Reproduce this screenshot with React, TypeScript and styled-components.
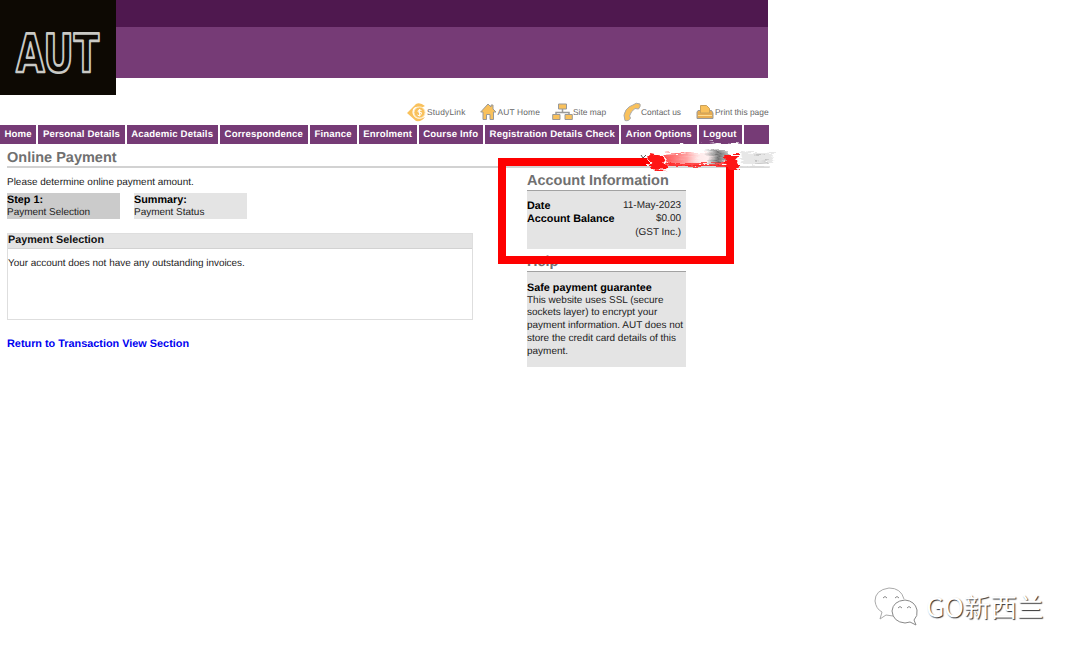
import React from 'react';
import styled, { createGlobalStyle } from 'styled-components';

const Global = createGlobalStyle`
  * { box-sizing: border-box; }
  body { margin: 0; background: #fff; font-family: "Liberation Sans", Arial, sans-serif; text-rendering: geometricPrecision; }
`;

const Page = styled.div`
  position: relative;
  width: 1080px;
  height: 656px;
  overflow: hidden;
  color: #222;
  font-size: 9.97px;
  line-height: 12.75px;
`;
const Site = styled.div`
  width: 769px;
`;
const Header = styled.header`
  display: flex;
  height: 95px;
`;
const LogoBox = styled.div`
  width: 116px;
  height: 94.5px;
  background: #0d0903;
`;
const Banner = styled.div`
  width: 652px;
  height: 78px;
  background: #763b76;
  border-top: 27px solid #4f184f;
`;
const Tools = styled.div`
  display: flex;
  height: 30px;
  padding-left: 407px;
`;
const Tool = styled.a<{ $w: number; $gap: number; $ls: number }>`
  display: flex;
  flex: none;
  align-items: center;
  gap: ${(p) => p.$gap}px;
  width: ${(p) => p.$w}px;
  height: 20px;
  margin-top: 7px;
  color: #666;
  font-size: 8.4px;
  white-space: nowrap;
  letter-spacing: ${(p) => p.$ls}px;
  svg { flex: none; }
`;
const Nav = styled.nav`
  display: flex;
  gap: 2px;
  height: 19px;
`;
const NavItem = styled.a<{ $w: number }>`
  width: ${(p) => p.$w}px;
  padding-left: 4.5px;
  background: #763b76;
  color: #fff;
  font-weight: bold;
  font-size: 9.6px;
  line-height: 20px;
  letter-spacing: 0.15px;
  white-space: nowrap;
`;
const Title = styled.h1`
  margin: 0 0 0 7px;
  height: 24px;
  border-bottom: 2px solid #d2d2d2;
  color: #707070;
  font-size: 14.5px;
  line-height: 28px;
`;
const Columns = styled.div`
  display: flex;
  padding-left: 7px;
`;
const Main = styled.main`
  width: 520px;
  padding-top: 9px;
`;
const Intro = styled.p`
  margin: 0;
  height: 16px;
  font-size: 9.97px;
`;
const Steps = styled.div`
  display: flex;
  gap: 14px;
  height: 40px;
`;
const Step = styled.div<{ $active?: boolean }>`
  width: 113px;
  height: 26px;
  padding-top: 1px;
  background: ${(p) => (p.$active ? '#cbcbcb' : '#e4e4e4')};
`;
const Strong = styled.strong`
  display: block;
  color: #000;
  font-size: 10.8px;
`;
const Panel = styled.section`
  width: 466px;
  height: 87px;
  border: 1.5px solid #dedede;
`;
const PanelHead = styled.h2`
  margin: 0;
  height: 14.5px;
  border-bottom: 1px solid #d2d2d2;
  background: #e4e4e4;
  color: #111;
  font-size: 10.8px;
  line-height: 13.5px;
`;
const PanelText = styled.p`
  margin: 9px 0 0;
  font-size: 9.94px;
`;
const Return = styled.a`
  display: block;
  margin-top: 18px;
  color: #0000f0;
  font-weight: bold;
  font-size: 10.87px;
`;
const Side = styled.aside`
  width: 159px;
  padding-top: 1px;
`;
const SideTitle = styled.h2`
  margin: 0;
  height: 21.5px;
  border-bottom: 1px solid #a2a2a2;
  color: #707070;
  font-size: 14.5px;
  line-height: 24px;
  white-space: nowrap;
`;
const SideBox = styled.div<{ $h: number; $mb?: number; $pt?: number }>`
  height: ${(p) => p.$h}px;
  margin-bottom: ${(p) => p.$mb ?? 0}px;
  padding-top: ${(p) => p.$pt ?? 9.5}px;
  background: #e4e4e4;
  white-space: nowrap;
`;
const Row = styled.div`
  display: flex;
  justify-content: space-between;
  height: 13.3px;
  padding-right: 5px;
`;
const Highlight = styled.div`
  position: absolute;
  left: 498px;
  top: 158px;
  width: 236px;
  height: 106px;
  border: 8px solid #fe0000;
`;
const Scribble = styled.svg`
  position: absolute;
  left: 630px;
  top: 138px;
`;
const Watermark = styled.div`
  position: absolute;
  left: 873px;
  top: 584px;
  display: flex;
  align-items: center;
  gap: 7px;
  color: #fff;
  font: 26.5px/44px "Noto Sans CJK SC", sans-serif;
  text-shadow: 1px 1px 1px #333;
  white-space: nowrap;
`;

const o = '#f9c15c';
const g = '#999';

const StudyIcon = () => (
  <svg width="20" height="20" viewBox="0 0 20 20">
    <path d="M0 11 9 2Q13 0 18 4L14 6Q9 3 6 7Q4 13 9 16Q13 18 18 15Q15 20 9 19Z" fill={o} />
    <circle cx="12.5" cy="10.5" r="5.6" fill={o} stroke="#fff0d0" />
    <path d="M14.5 8.5q-3-1.5-3.5.3t2 1.5 1 2.3-3.5.3M12.6 7v7" fill="none" stroke="#fff" strokeWidth="1" />
  </svg>
);
const HomeIcon = () => (
  <svg width="17" height="18" viewBox="0 0 17 18">
    <path d="M.7 9 8 1 11 4V2H13V6L16 9H13.500V16.500H10V11.500H6.500V16.500H3V9Z" fill={o} stroke={g} />
  </svg>
);
const MapIcon = () => (
  <svg width="21" height="18" viewBox="0 0 21 18">
    <path d="M10.5 6v4M4 12V9.5H17V12" fill="none" stroke={g} strokeWidth="1.5" />
    <path d="M6.500 1h8v5h-8zM.700 11.500h7.300v5H.700zM13 11.500h7.300v5H13z" fill={o} stroke={g} />
  </svg>
);
const PhoneIcon = () => (
  <svg width="18" height="20" viewBox="0 0 18 20">
    <path d="M10 3Q13 0 17 2Q18 4 15.500 7L12 6.500Q8 9 6.500 14L7.500 16Q6 19.500 2 18.500Q-.5 13 3 8Q6 4 10 3Z" fill={o} stroke="#aaa" />
  </svg>
);
const PrintIcon = () => (
  <svg width="18" height="17" viewBox="0 0 18 17">
    <path d="M2 6.500H15.500L17 9V14.500H1V8Z" fill="#e7ad52" stroke={g} />
    <path d="M4.500 9V1.500H10.500L13.500 4.500V9Z" fill={o} stroke="#c9a05a" />
    <path d="M2 11.500H16" stroke="#ffdf94" />
  </svg>
);

const tools = [
  { t: 'StudyLink', w: 73, gap: 0, ls: 0.2, I: StudyIcon },
  { t: 'AUT Home', w: 72, gap: 0.5, ls: 0.15, I: HomeIcon },
  { t: 'Site map', w: 71, gap: 0, ls: 0, I: MapIcon },
  { t: 'Contact us', w: 72.5, gap: 0, ls: 0, I: PhoneIcon },
  { t: 'Print this page', w: 74, gap: 1.5, ls: 0, I: PrintIcon },
];
const nav: [string, number][] = [
  ['Home', 36.5], ['Personal Details', 86.5], ['Academic Details', 91.5], ['Correspondence', 88],
  ['Finance', 47], ['Enrolment', 58], ['Course Info', 64.5], ['Registration Details Check', 134.5],
  ['Arion Options', 75.5], ['Logout', 43.5], ['', 25],
];

export default function App() {
  return (
    <Page>
      <Global />
      <Site>
        <Header>
          <LogoBox>
            <svg width="116" height="94" fontFamily="DejaVu Sans, sans-serif" fontWeight="bold" fontSize="53" fill="#0d0903" stroke="#c9c9c5" strokeWidth="2.6" strokeLinejoin="round">
              <text x="16" y="72" textLength="83" lengthAdjust="spacingAndGlyphs">AUT</text>
            </svg>
          </LogoBox>
          <Banner />
        </Header>
        <Tools>
          {tools.map(({ t, w, gap, ls, I }) => (
            <Tool key={t} $w={w} $gap={gap} $ls={ls}><I />{t}</Tool>
          ))}
        </Tools>
        <Nav>{nav.map(([t, w]) => <NavItem key={t} $w={w}>{t}</NavItem>)}</Nav>
        <Title>Online Payment</Title>
        <Columns>
          <Main>
            <Intro>Please determine online payment amount.</Intro>
            <Steps>
              <Step $active><Strong>Step 1:</Strong>Payment Selection</Step>
              <Step><Strong>Summary:</Strong>Payment Status</Step>
            </Steps>
            <Panel>
              <PanelHead>Payment Selection</PanelHead>
              <PanelText>Your account does not have any outstanding invoices.</PanelText>
            </Panel>
            <Return>Return to Transaction View Section</Return>
          </Main>
          <Side>
            <SideTitle>Account Information</SideTitle>
            <SideBox $h={58} $mb={1.5}>
              <Row><Strong>Date</Strong>11-May-2023</Row>
              <Row><Strong>Account Balance</Strong>$0.00</Row>
              <Row><span />(GST Inc.)</Row>
            </SideBox>
            <SideTitle>Help</SideTitle>
            <SideBox $h={95} $pt={10.3}>
              <Strong>Safe payment guarantee</Strong>
              This website uses SSL (secure<br />sockets layer) to encrypt your<br />
              payment information. AUT does not<br />store the credit card details of this<br />payment.
            </SideBox>
          </Side>
        </Columns>
      </Site>
      <Highlight />
      <Scribble width="150" height="40" viewBox="0 0 150 40">
        <defs>
          <filter id="brush" x="-10%" y="-30%" width="120%" height="160%">
            <feTurbulence type="fractalNoise" baseFrequency="0.07 0.5" numOctaves="3" seed="4" result="n" />
            <feDisplacementMap in="SourceGraphic" in2="n" scale="9" xChannelSelector="R" yChannelSelector="A" />
            <feGaussianBlur stdDeviation="0.5" />
          </filter>
          <linearGradient id="red" x1="0" x2="1">
            <stop offset="0" stopColor="#f22" stopOpacity=".8" />
            <stop offset=".45" stopColor="#f66" stopOpacity=".6" />
            <stop offset=".7" stopColor="#fbb" stopOpacity=".3" />
            <stop offset="1" stopColor="#fcc" stopOpacity=".2" />
          </linearGradient>
          <linearGradient id="grey" x1="0" x2="1">
            <stop offset="0" stopColor="#999" stopOpacity="0" />
            <stop offset=".6" stopColor="#444" stopOpacity=".75" />
            <stop offset="1" stopColor="#666" stopOpacity=".4" />
          </linearGradient>
        </defs>
        <path d="M18 14 30 10 48 8 70 7 88 5 104 6 120 8 143 11 143 27 96 26 18 28Z" fill="#fff" filter="url(#brush)" />
        <path d="M20 14H102V27H20Z" fill="#fff" />
        <path d="M11 17l2 3 3-3" fill="none" stroke="#555" />
        <path d="M22 28.500H96M105 29H140" stroke="#ddd" strokeWidth="1.500" />
        <g filter="url(#brush)">
          <path d="M18 15 33 18 35 24 38 31 24 32 19 25Z" fill="#fe1515" />
          <path d="M34 16 58 14 85 16 82 25 38 27Z" fill="url(#red)" />
          <path d="M36 25H97V28H36Z" fill="#ff2222" opacity=".8" />
          <path d="M74 12 98 11 97 22 92 26 78 25Z" fill="url(#grey)" />
          <path d="M94 17 108 17 107 24 109 31 100 32 95 27Z" fill="#fe1515" />
          <path d="M110 13 143 15 142 25 112 26Z" fill="#aaa" opacity=".28" />
          <path d="M121 26 138 25M125 17 137 18M123 22 139 24" stroke="#777" opacity=".35" />
        </g>
      </Scribble>
      <Watermark>
        <svg width="46" height="42" viewBox="0 0 46 42" fill="#fff" stroke="#888" strokeWidth="1">
          <path d="M31 14Q28 3 16 3Q2 5 2 16Q3 24 9 27L7 34 13 30 20 31" stroke="#aaa" />
          <path d="M32 15Q20 16 19 26Q20 37 32 38L37 37 43 40 41 35Q45 31 44 25Q42 16 32 15Z" />
          <path d="M10 13q2-3 4 0M22 13q2-3 4 0M25 23q2-3 4 0M34 23q2-3 4 0" fill="none" />
        </svg>
        GO新西兰
      </Watermark>
    </Page>
  );
}
